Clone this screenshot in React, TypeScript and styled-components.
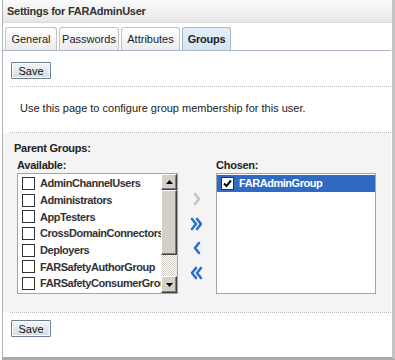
import React from "react";
import styled, { createGlobalStyle } from "styled-components";

const GlobalStyle = createGlobalStyle`
  html, body {
    margin: 0;
    padding: 0;
    background: #ffffff;
  }
  body {
    font-family: "Liberation Sans", Arial, sans-serif;
    font-size: 11px;
    color: #222;
  }
`;

/* whole settings panel */
const Frame = styled.div`
  box-sizing: border-box;
  width: 393px;
  height: 360px;
  margin-left: 2px;
  border-left: 1px solid #b4b4b4;
  border-right: 3px solid #c4c4c4;
  border-bottom: 3px solid #a9a9a9;
  display: flex;
  flex-direction: column;
  background: #fff;
`;

const TitleBar = styled.div`
  height: 22px;
  display: flex;
  align-items: center;
  padding-left: 4px;
  font-weight: 700;
  font-size: 11px;
  letter-spacing: -0.25px;
  color: #333;
  background: linear-gradient(#fbfbfb, #e6e6e6);
  border-bottom: 1px solid #dadada;
`;

const TabRow = styled.div`
  display: flex;
  gap: 2px;
  margin-top: 4px;
  padding-left: 2px;
  border-bottom: 1px solid #a9b7c6;
  margin-right: 1px;
`;

const Tab = styled.div<{ $active?: boolean; $w: number }>`
  box-sizing: border-box;
  width: ${(p) => p.$w}px;
  height: 23px;
  display: flex;
  align-items: center;
  justify-content: center;
  border: 1px solid ${(p) => (p.$active ? "#a9b7c6" : "#c2c2c2")};
  border-bottom: none;
  border-radius: 3px 3px 0 0;
  font-weight: ${(p) => (p.$active ? 700 : 400)};
  letter-spacing: ${(p) => (p.$active ? "-0.25px" : "0")};
  color: #222;
  background: ${(p) =>
    p.$active ? "linear-gradient(#e4eef8, #d6e4f2)" : "linear-gradient(#ffffff, #ececec)"};
`;

const ButtonBar = styled.div<{ $top: number }>`
  padding: ${(p) => p.$top}px 0 0 8px;
  height: 24px;
`;

const SaveButton = styled.button`
  box-sizing: border-box;
  width: 40px;
  height: 17px;
  padding: 0;
  font-family: "Liberation Sans", Arial, sans-serif;
  font-size: 11px;
  color: #111;
  border: 1px solid #6f7d8c;
  border-radius: 1px;
  background: linear-gradient(#f4f7fb, #d2dbe7);
  box-shadow: inset 0 0 0 1px #ffffff;
`;

const Dotted = styled.div`
  margin: 0 1px 0 7px;
  border-top: 1px dotted #b9b9b9;
`;

const Intro = styled.p`
  margin: 0;
  padding: 15px 0 0 17px;
  height: 30px;
  font-size: 11px;
  color: #222;
`;

const GroupSection = styled.section`
  background: #f4f4f4;
  height: 170px;
  padding: 9px 0 0 11px;
  margin-right: 1px;
`;

const SectionTitle = styled.div`
  font-weight: 700;
  letter-spacing: -0.25px;
  color: #222;
  height: 13px;
  line-height: 13px;
`;

const Columns = styled.div`
  display: flex;
  margin-top: 4px;
  padding-left: 3px;
`;

const Column = styled.div`
  display: flex;
  flex-direction: column;
`;

const ColLabel = styled.div`
  font-weight: 700;
  letter-spacing: -0.25px;
  color: #222;
  height: 13px;
  line-height: 13px;
  margin-bottom: 1px;
`;

const ListBox = styled.div<{ $w: number }>`
  box-sizing: border-box;
  width: ${(p) => p.$w}px;
  height: 121px;
  border: 1px solid #a4a4a4;
  background: #fff;
  display: flex;
  overflow: hidden;
`;

const Rows = styled.div`
  flex: 1;
  overflow: hidden;
  padding-top: 1px;
`;

const Row = styled.div<{ $selected?: boolean }>`
  height: 16.7px;
  display: flex;
  align-items: center;
  gap: 5px;
  padding-left: 4px;
  white-space: nowrap;
  font-weight: 700;
  letter-spacing: -0.45px;
  color: ${(p) => (p.$selected ? "#fff" : "#333")};
  background: ${(p) => (p.$selected ? "#316ac5" : "transparent")};
`;

const Box = styled.span`
  box-sizing: border-box;
  flex: none;
  width: 13px;
  height: 13px;
  border: 1px solid #333;
  background: #fff;
  display: flex;
  align-items: center;
  justify-content: center;
`;

const Scrollbar = styled.div`
  flex: none;
  width: 16px;
  display: flex;
  flex-direction: column;
  background-color: #ece9e4;
  background-image: repeating-conic-gradient(#d4d0c8 0 25%, #ffffff 0 50%);
  background-size: 2px 2px;
`;

const ScrollPart = styled.div<{ $h: number }>`
  box-sizing: border-box;
  height: ${(p) => p.$h}px;
  background: #d4d0c8;
  border-top: 1px solid #fff;
  border-left: 1px solid #fff;
  border-right: 1px solid #404040;
  border-bottom: 1px solid #404040;
  box-shadow: inset -1px -1px 0 #808080;
  display: flex;
  align-items: center;
  justify-content: center;
`;

const Track = styled.div`
  flex: 1;
`;

const Movers = styled.div`
  width: 38px;
  display: flex;
  flex-direction: column;
  align-items: center;
  padding-top: 32px;
  gap: 8.5px;
`;

const Mover = styled.svg`
  display: block;
  width: 20px;
  height: 16px;
`;

const Arrow = ({ dir, double, off }: { dir: "r" | "l"; double?: boolean; off?: boolean }) => {
  const c = off ? "#c4c4c4" : "#2f6fcc";
  const one = (x: number) =>
    dir === "r" ? `${x},3 ${x + 4},8 ${x},13` : `${x + 4},3 ${x},8 ${x + 4},13`;
  const xs = double ? [5, 10] : [8];
  return (
    <Mover viewBox="0 0 20 16">
      {xs.map((x) => (
        <polyline
          key={x}
          points={one(x)}
          fill="none"
          stroke={c}
          strokeWidth={2.6}
          strokeLinecap="round"
          strokeLinejoin="round"
        />
      ))}
    </Mover>
  );
};

const available = [
  "AdminChannelUsers",
  "Administrators",
  "AppTesters",
  "CrossDomainConnectors",
  "Deployers",
  "FARSafetyAuthorGroup",
  "FARSafetyConsumerGroup",
];

const Tri = ({ up }: { up?: boolean }) => (
  <svg width="7" height="4" viewBox="0 0 7 4">
    <polygon points={up ? "0,4 7,4 3.5,0" : "0,0 7,0 3.5,4"} fill="#000" />
  </svg>
);

export default function App() {
  return (
    <>
      <GlobalStyle />
      <Frame>
        <TitleBar>Settings for FARAdminUser</TitleBar>
        <TabRow>
          <Tab $w={52}>General</Tab>
          <Tab $w={60}>Passwords</Tab>
          <Tab $w={59}>Attributes</Tab>
          <Tab $w={49} $active>
            Groups
          </Tab>
        </TabRow>
        <ButtonBar $top={11}>
          <SaveButton>Save</SaveButton>
        </ButtonBar>
        <Dotted />
        <Intro>Use this page to configure group membership for this user.</Intro>
        <Dotted />
        <GroupSection>
          <SectionTitle>Parent Groups:</SectionTitle>
          <Columns>
            <Column>
              <ColLabel>Available:</ColLabel>
              <ListBox $w={161}>
                <Rows>
                  {available.map((g) => (
                    <Row key={g}>
                      <Box />
                      {g}
                    </Row>
                  ))}
                </Rows>
                <Scrollbar>
                  <ScrollPart $h={16}>
                    <Tri up />
                  </ScrollPart>
                  <ScrollPart $h={65} />
                  <Track />
                  <ScrollPart $h={17}>
                    <Tri />
                  </ScrollPart>
                </Scrollbar>
              </ListBox>
            </Column>
            <Movers>
              <Arrow dir="r" off />
              <Arrow dir="r" double />
              <Arrow dir="l" />
              <Arrow dir="l" double />
            </Movers>
            <Column>
              <ColLabel>Chosen:</ColLabel>
              <ListBox $w={160}>
                <Rows>
                  <Row $selected>
                    <Box>
                      <svg width="9" height="9" viewBox="0 0 9 9">
                        <polyline
                          points="1,4.5 3.5,7 8,1.5"
                          fill="none"
                          stroke="#000"
                          strokeWidth={2}
                        />
                      </svg>
                    </Box>
                    FARAdminGroup
                  </Row>
                </Rows>
              </ListBox>
            </Column>
          </Columns>
        </GroupSection>
        <Dotted />
        <ButtonBar $top={7}>
          <SaveButton>Save</SaveButton>
        </ButtonBar>
      </Frame>
    </>
  );
}
